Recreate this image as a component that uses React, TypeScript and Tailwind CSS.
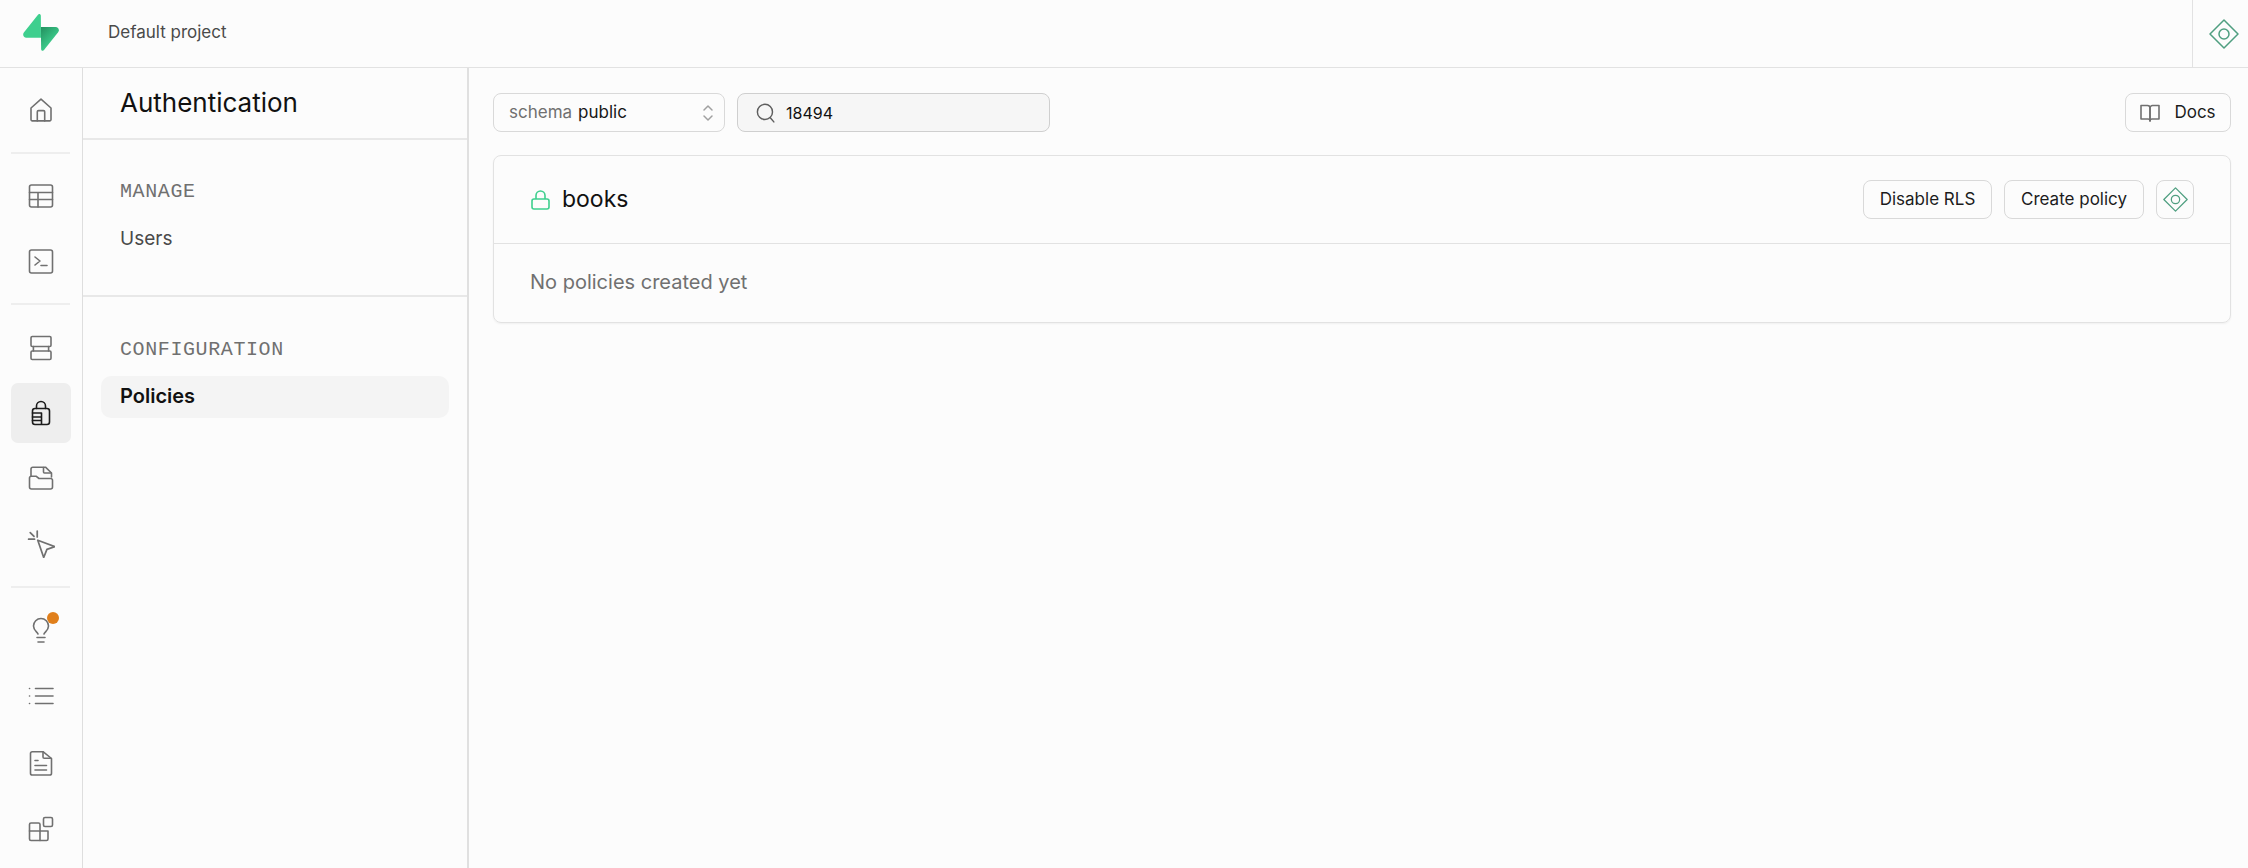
import React from "react";

const font = "font-['Inter','Noto_Sans',sans-serif]";

const Logo = () => (
  <svg width="36" height="37" viewBox="0 0 109 113" fill="none">
    <path
      d="M63.7076 110.284C60.8481 113.885 55.0502 111.912 54.9813 107.314L53.9738 40.0627L99.1935 40.0627C107.384 40.0627 111.952 49.5228 106.859 55.9374L63.7076 110.284Z"
      fill="url(#logoA)"
    />
    <path
      d="M45.317 2.07103C48.1765 -1.53037 53.9745 0.442937 54.0434 5.04075L54.4849 72.2922H9.83113C1.64038 72.2922 -2.92775 62.8321 2.1655 56.4175L45.317 2.07103Z"
      fill="#3ECF8E"
    />
    <defs>
      <linearGradient id="logoA" x1="54" y1="45" x2="95" y2="85" gradientUnits="userSpaceOnUse">
        <stop stopColor="#249361" />
        <stop offset="1" stopColor="#3ECF8E" />
      </linearGradient>
    </defs>
  </svg>
);

const Diamond = ({ size }: { size: number }) => (
  <svg width={size} height={size} viewBox="0 0 30 30" fill="none" stroke="#4f9f80" strokeWidth="1.5">
    <path d="M15 1 L29 15 L15 29 L1 15 Z" strokeLinejoin="round" />
    <circle cx="15" cy="15" r="5" />
  </svg>
);

const Ico = ({ children, w = 26 }: { children: React.ReactNode; w?: number }) => (
  <svg width={w} height={w} viewBox="0 0 26 26" fill="none" stroke="currentColor" strokeWidth="1.6" strokeLinecap="round" strokeLinejoin="round">
    {children}
  </svg>
);

const railIcons = {
  home: (
    <Ico>
      <path d="M3 11 L13 2.2 L23 11 V22.6 A1.3 1.3 0 0 1 21.7 23.9 H4.3 A1.3 1.3 0 0 1 3 22.6 Z" />
      <path d="M9.3 23.9 V14.8 A1.2 1.2 0 0 1 10.5 13.6 H15.5 A1.2 1.2 0 0 1 16.7 14.8 V23.9" />
    </Ico>
  ),
  table: (
    <Ico>
      <rect x="1.5" y="2" width="23" height="22" rx="2" />
      <path d="M1.5 9.5 H24.5 M1.5 16.5 H24.5 M10 9.5 V24" />
    </Ico>
  ),
  terminal: (
    <Ico>
      <rect x="1.5" y="2" width="23" height="23" rx="2" />
      <path d="M7 9 L12 13 L7 17 M13 17.5 H19" />
    </Ico>
  ),
  database: (
    <Ico>
      <rect x="3" y="1.5" width="20" height="10" rx="1.2" />
      <rect x="3" y="16" width="20" height="8.5" rx="1.2" />
      <path d="M5.4 11.5 V16 M20.6 11.5 V16" />
    </Ico>
  ),
  auth: (
    <Ico>
      <path d="M8.5 8.5 V6 A4.5 4.5 0 0 1 17.5 6 V8.5" />
      <rect x="4.5" y="8.5" width="17" height="16" rx="2.5" />
      <path d="M4.5 13 H13.5 V24 M4.5 17 H13.5 M4.5 20.5 H13.5" />
    </Ico>
  ),
  storage: (
    <Ico>
      <path d="M3 11 V4 A1.8 1.8 0 0 1 4.8 2.2 H17.5 L23.5 8 V12" />
      <path d="M15.5 2.5 V7 A1 1 0 0 0 16.5 8 H23" />
      <path d="M1.5 13 A1.8 1.8 0 0 1 3.3 11.2 H8 L11 13.5 H22.7 A1.8 1.8 0 0 1 24.5 15.3 V22 A2 2 0 0 1 22.5 24 H3.5 A2 2 0 0 1 1.5 22 Z" />
    </Ico>
  ),
  pointer: (
    <Ico w={28}>
      <path d="M10 9.5 L26 15.5 L18.5 18 L15.5 25.5 Z" />
      <path d="M9.5 1 V6.5 M1.5 8.5 H7 M3 2.5 L6.5 6" />
    </Ico>
  ),
  bulb: (
    <Ico>
      <path d="M10 17 C9.5 15 5.5 13.5 5.5 9 A7.5 7.5 0 0 1 20.5 9 C20.5 13.5 16.5 15 16 17" />
      <path d="M9 20.5 H17 M10 25 H16" />
    </Ico>
  ),
  list: (
    <Ico>
      <path d="M7.5 5.5 H25 M7.5 13 H25 M7.5 20.5 H25" />
      <path d="M1.5 5.5 H1.6 M1.5 13 H1.6 M1.5 20.5 H1.6" />
    </Ico>
  ),
  doc: (
    <Ico>
      <path d="M2.5 3.5 A1.8 1.8 0 0 1 4.3 1.7 H15 L23.5 8.5 V23.2 A1.8 1.8 0 0 1 21.7 25 H4.3 A1.8 1.8 0 0 1 2.5 23.2 Z" />
      <path d="M15 2 V7 A1.3 1.3 0 0 0 16.3 8.3 H23" />
      <path d="M7 10.5 H10 M7 15.5 H18.5 M7 20 H18.5" />
    </Ico>
  ),
  extensions: (
    <Ico>
      <rect x="15.5" y="1.5" width="9" height="9" rx="1.5" />
      <path d="M3 7 H10.5 A1.5 1.5 0 0 1 12 8.5 V15 H20 V23 A1.5 1.5 0 0 1 18.5 24.5 H3 A1.5 1.5 0 0 1 1.5 23 V8.5 A1.5 1.5 0 0 1 3 7 Z" />
      <path d="M1.5 15 H12 V24.5" />
    </Ico>
  ),
};

const RailItem = ({ name, active }: { name: keyof typeof railIcons; active?: boolean }) => (
  <div
    className={`relative w-[60px] h-[60px] flex items-center justify-center rounded-[7px] ${
      active ? "bg-[#eeeeee] text-[#1c1c1c]" : "text-[#707070]"
    }`}
  >
    {railIcons[name]}
    {name === "bulb" && <span className="absolute top-[12px] left-[36px] w-3 h-3 rounded-full bg-[#e07f1b]" />}
  </div>
);

const Divider = () => <div className="w-[59px] h-[2px] bg-[#eeeeee]" />;

const Button = ({ children, className = "" }: { children: React.ReactNode; className?: string }) => (
  <button className={`h-[39px] flex items-center justify-center border border-[#d9d9d9] rounded-[8px] text-[#1c1c1c] text-[17px] ${className}`}>
    {children}
  </button>
);

export default function App() {
  return (
    <div className={`${font} w-[2248px] h-[868px] overflow-hidden flex flex-col bg-[#fcfcfc] text-[#171717]`}>
      <header className="h-[68px] shrink-0 flex items-center border-b border-[#e2e2e2]">
        <div className="w-[108px] pl-[23px] pb-[3px] flex items-center">
          <Logo />
        </div>
        <span className="text-[#4a4a4a] text-[17px] pb-[2px]">Default project</span>
        <div className="ml-auto w-[56px] h-full border-l border-[#e2e2e2] flex items-center justify-center pl-[6px]">
          <Diamond size={30} />
        </div>
      </header>

      <div className="flex-1 flex min-h-0">
        <nav className="w-[83px] shrink-0 border-r border-[#dedede] pt-[12px] pl-[11px] flex flex-col">
          <RailItem name="home" />
          <div className="my-[12px]">
            <Divider />
          </div>
          <div className="flex flex-col gap-[5px]">
            <RailItem name="table" />
            <RailItem name="terminal" />
          </div>
          <div className="mt-[12px] mb-[13px]">
            <Divider />
          </div>
          <div className="flex flex-col gap-[5px]">
            <RailItem name="database" />
            <RailItem name="auth" active />
            <RailItem name="storage" />
            <div className="mt-[1px]">
              <RailItem name="pointer" />
            </div>
          </div>
          <div className="mt-[12px] mb-[12px]">
            <Divider />
          </div>
          <div className="flex flex-col gap-[6px]">
            <RailItem name="bulb" />
            <RailItem name="list" />
            <div className="mt-[1px]">
              <RailItem name="doc" />
            </div>
            <RailItem name="extensions" />
          </div>
        </nav>

        <aside className="w-[386px] shrink-0 border-r-2 border-[#e0e0e0] flex flex-col">
          <div className="h-[72px] shrink-0 border-b-2 border-[#e8e8e8] flex items-center pl-[37px] pb-[1px] text-[26px] text-[#111111]">
            Authentication
          </div>
          <div className="h-[157px] shrink-0 border-b-2 border-[#e8e8e8] pt-[38px] pl-[37px]">
            <div className="font-['Liberation_Mono',monospace] text-[20px] tracking-[0.6px] text-[#707070] leading-[28px]">MANAGE</div>
            <div className="mt-[19px] text-[19px] text-[#4a4a4a] leading-[28px]">Users</div>
          </div>
          <div className="pt-[39px] px-[18px]">
            <div className="pl-[19px] font-['Liberation_Mono',monospace] text-[20px] tracking-[0.6px] text-[#707070] leading-[28px]">CONFIGURATION</div>
            <div className="mt-[12px] h-[42px] rounded-[10px] bg-[#f4f4f4] pl-[19px] pb-[2px] flex items-center text-[20px] font-semibold text-[#111111]">
              Policies
            </div>
          </div>
        </aside>

        <main className="flex-1 min-w-0 pt-[25px] pl-[24px] pr-[17px]">
          <div className="flex items-center">
            <div className="w-[232px] h-[39px] border border-[#d9d9d9] rounded-[8px] pl-[15px] pr-[10px] flex items-center text-[17px]">
              <span className="text-[#707070] mr-[6px]">schema</span>
              <span className="text-[#171717]">public</span>
              <svg className="ml-auto text-[#a0a0a0]" width="12" height="20" viewBox="0 0 12 20" fill="none" stroke="currentColor" strokeWidth="1.5" strokeLinecap="round" strokeLinejoin="round">
                <path d="M2 7 L6 3 L10 7 M2 13 L6 17 L10 13" />
              </svg>
            </div>
            <div className="ml-[12px] w-[313px] h-[39px] bg-[#f6f6f6] border border-[#cfcfcf] rounded-[8px] pl-[18px] flex items-center text-[16px] text-[#111111]">
              <svg className="text-[#5e5e5e] mr-[11px]" width="19" height="20" viewBox="0 0 17 18" fill="none" stroke="currentColor" strokeWidth="1.3" strokeLinecap="round">
                <circle cx="8" cy="8" r="6.8" />
                <path d="M13 13.5 L16 17" />
              </svg>
              18494
            </div>
            <Button className="ml-auto w-[106px] gap-[14px]">
              <svg className="text-[#707070]" width="20" height="20" viewBox="0 0 20 20" fill="none" stroke="currentColor" strokeWidth="1.6" strokeLinejoin="round">
                <path d="M1 2.5 H7.5 A2.5 2.5 0 0 1 10 5 V18 A2 2 0 0 0 8 16 H1 Z" />
                <path d="M19 2.5 H12.5 A2.5 2.5 0 0 0 10 5 V18 A2 2 0 0 1 12 16 H19 Z" />
              </svg>
              Docs
            </Button>
          </div>

          <div className="mt-[23px] h-[168px] border border-[#e2e2e2] rounded-[8px] shadow-[0_1px_2px_rgba(0,0,0,0.05)] flex flex-col">
            <div className="h-[88px] shrink-0 border-b border-[#e2e2e2] pl-[37px] pr-[36px] flex items-center">
              <svg className="text-[#3ecf8e]" width="19" height="20" viewBox="0 0 19 20" fill="none" stroke="currentColor" strokeWidth="1.6">
                <rect x="1" y="9" width="17" height="10" rx="2" />
                <path d="M5 9 V5.5 A4.5 4.5 0 0 1 14 5.5 V9" />
              </svg>
              <span className="ml-[12px] text-[23px] text-[#111111]">books</span>
              <div className="ml-auto flex items-center gap-[12px]">
                <Button className="w-[129px]">Disable RLS</Button>
                <Button className="w-[140px]">Create policy</Button>
                <Button className="w-[38px]">
                  <Diamond size={25} />
                </Button>
              </div>
            </div>
            <div className="flex-1 pl-[36px] pb-[2px] flex items-center text-[20px] text-[#707070]">No policies created yet</div>
          </div>
        </main>
      </div>
    </div>
  );
}
